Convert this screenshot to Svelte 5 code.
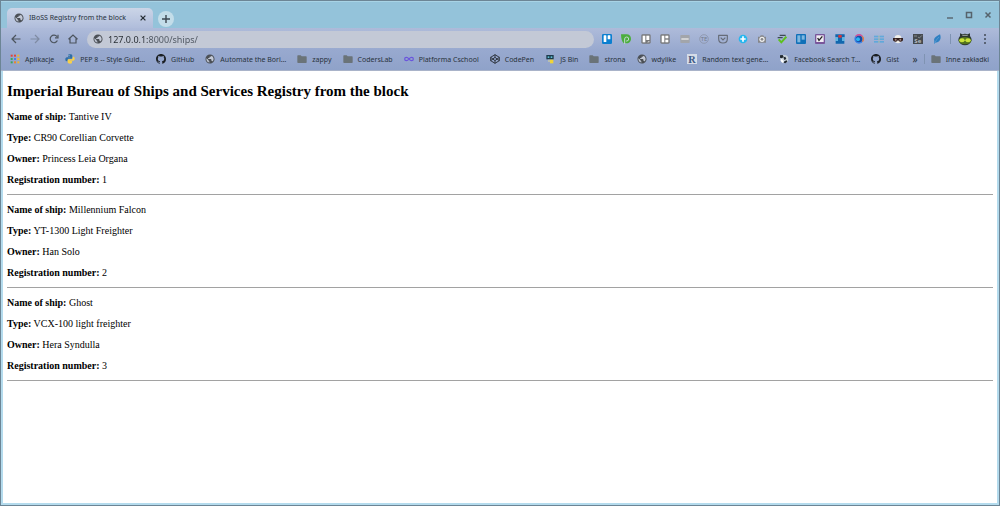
<script lang="ts">
	type Bookmark = { icon: string; label: string };

	const bookmarks: Bookmark[] = [
		{ icon: 'apps', label: 'Aplikacje' },
		{ icon: 'python', label: 'PEP 8 -- Style Guid…' },
		{ icon: 'github', label: 'GitHub' },
		{ icon: 'globe', label: 'Automate the Bori…' },
		{ icon: 'folder', label: 'zappy' },
		{ icon: 'folder', label: 'CodersLab' },
		{ icon: 'infinity', label: 'Platforma Cschool' },
		{ icon: 'codepen', label: 'CodePen' },
		{ icon: 'jsbin', label: 'JS Bin' },
		{ icon: 'folder', label: 'strona' },
		{ icon: 'globe', label: 'wdylike' },
		{ icon: 'random', label: 'Random text gene…' },
		{ icon: 'search', label: 'Facebook Search T…' },
		{ icon: 'github', label: 'Gist' }
	];

	const extensions = [
		'trello', 'pushed', 'board', 'boardAlt', 'strip', 'te', 'pocket', 'plus', 'camera',
		'check', 'trelloFlat', 'purple', 'flag', 'swirl', 'dots', 'incognito', 'selenium', 'feather'
	];

	const ships = [
		{ name: 'Tantive IV', type: 'CR90 Corellian Corvette', owner: 'Princess Leia Organa', number: 1 },
		{ name: 'Millennium Falcon', type: 'YT-1300 Light Freighter', owner: 'Han Solo', number: 2 },
		{ name: 'Ghost', type: 'VCX-100 light freighter', owner: 'Hera Syndulla', number: 3 }
	];

	const appColors = ['#e0453a', '#e0453a', '#f0b52a', '#3aa757', '#4a7fe0', '#f0b52a', '#3aa757', '#e8862e', '#f0b52a'];

	let address = $state('127.0.0.1:8000/ships/');
</script>

{#snippet globe()}
	<svg viewBox="1 1 22 22" fill="#4b5056">
		<circle cx="12" cy="12" r="8.5" fill="#c3c9d6" />
		<path d="M12 2C6.48 2 2 6.48 2 12s4.48 10 10 10 10-4.48 10-10S17.52 2 12 2zm-1 17.93c-3.95-.49-7-3.85-7-7.93 0-.62.08-1.21.21-1.79L9 15v1c0 1.1.9 2 2 2v1.93zm6.9-2.54c-.26-.81-1-1.39-1.9-1.39h-1v-3c0-.55-.45-1-1-1H8v-2h2c.55 0 1-.45 1-1V7h2c1.1 0 2-.9 2-2v-.41c2.93 1.19 5 4.06 5 7.41 0 2.08-.8 3.97-2.1 5.39z" />
	</svg>
{/snippet}

{#snippet folder()}
	<svg viewBox="0 0 30 30" fill="#6a7378">
		<path d="M1 6q0-2 2-2h8l3 3h13q2 0 2 2v16q0 2-2 2H3q-2 0-2-2z" />
	</svg>
{/snippet}

{#snippet bookmarkIcon(name: string)}
	{#if name === 'globe'}
		{@render globe()}
	{:else if name === 'folder'}
		{@render folder()}
	{:else if name === 'apps'}
		<svg viewBox="0 0 30 30">
			{#each appColors as color, i}
				<rect x={2 + (i % 3) * 10} y={2 + Math.floor(i / 3) * 10} width="6" height="6" fill={color} />
			{/each}
		</svg>
	{:else if name === 'python'}
		<svg viewBox="0 0 30 30">
			<path fill="#2f6ea5" d="M15 1c-6 0-6 2-6 5v3h7v1H6c-4 0-5 3-5 6s1 6 4 6h3v-4c0-3 2-4 4-4h7c2 0 3-1 3-3V6c0-4-3-5-7-5z" />
			<path fill="#f7d04a" d="M15 29c6 0 6-2 6-5v-3h-7v-1h10c4 0 5-3 5-6s-1-6-4-6h-2v4c0 3-2 4-4 4h-7c-2 0-4 1-4 3v5c0 4 4 5 7 5z" />
			<circle cx="12" cy="5" r="1.5" fill="#fff" />
		</svg>
	{:else if name === 'github'}
		<svg viewBox="0 0 16 16" fill="#1b1f23">
			<path d="M8 0C3.58 0 0 3.58 0 8c0 3.54 2.29 6.53 5.47 7.59.4.07.55-.17.55-.38 0-.19-.01-.82-.01-1.49-2.01.37-2.53-.49-2.69-.94-.09-.23-.48-.94-.82-1.13-.28-.15-.68-.52-.01-.53.63-.01 1.08.58 1.23.82.72 1.21 1.87.87 2.33.66.07-.52.28-.87.51-1.07-1.78-.2-3.64-.89-3.64-3.95 0-.87.31-1.59.82-2.15-.08-.2-.36-1.02.08-2.12 0 0 .67-.21 2.2.82.64-.18 1.32-.27 2-.27.68 0 1.36.09 2 .27 1.53-1.04 2.2-.82 2.2-.82.44 1.1.16 1.92.08 2.12.51.56.82 1.27.82 2.15 0 3.07-1.87 3.75-3.65 3.95.29.25.54.73.54 1.48 0 1.07-.01 1.93-.01 2.2 0 .21.15.46.55.38A8.013 8.013 0 0016 8c0-4.42-3.58-8-8-8z" />
		</svg>
	{:else if name === 'infinity'}
		<svg viewBox="0 0 30 30" fill="none" stroke="#6a55dc" stroke-width="3.5">
			<path d="M15 15c-3-4-5-5-8-5s-5 2-5 5 2 5 5 5 5-1 8-5 5-5 8-5 5 2 5 5-2 5-5 5-5-1-8-5z" />
		</svg>
	{:else if name === 'codepen'}
		<svg viewBox="0 0 30 30" fill="none" stroke="#23282e" stroke-width="2.6" stroke-linejoin="round">
			<path d="M15 2L28 10v10L15 28 2 20V10zM15 2v8M15 20v8M2 10l13 10 13-10M2 20l13-10 13 10" />
		</svg>
	{:else if name === 'jsbin'}
		<svg viewBox="0 0 30 30">
			<rect x="4" y="3" width="22" height="13" fill="#1d3a4a" />
			<rect x="8" y="7" width="5" height="5" fill="#5ec1d8" />
			<rect x="17" y="7" width="5" height="5" fill="#5ec1d8" />
			<rect x="9" y="17" width="6" height="7" fill="#b9bfae" />
			<rect x="15" y="17" width="10" height="11" fill="#f0d437" />
		</svg>
	{:else if name === 'random'}
		<svg viewBox="0 0 30 30">
			<rect width="30" height="30" fill="#d5dce8" />
			<text x="4" y="26" font-family="Liberation Serif, serif" font-size="31" font-weight="bold" fill="#3d5a85">R</text>
		</svg>
	{:else if name === 'search'}
		<svg viewBox="0 0 30 30">
			<circle cx="16" cy="15" r="12" fill="#c9d3dc" />
			<path fill="#22292f" d="M3 4l8-1 3 5-5 5-6-2zM13 10l6-2 3 7-6 3zM16 22l7-3 2 4-6 5-5-2z" />
			<path fill="#fff" d="M6 15l5 2 3 7-4 2-5-6z" />
		</svg>
	{/if}
{/snippet}

{#snippet extensionIcon(name: string)}
	<svg viewBox="0 0 30 30">
		{#if name === 'trello'}
			<rect width="30" height="30" rx="4" fill="#0b7fd0" />
			<rect x="5" y="4" width="8" height="20" rx="1" fill="#fff" />
			<rect x="17" y="4" width="8" height="12" rx="1" fill="#fff" />
		{:else if name === 'pushed'}
			<path fill="#4bae3c" d="M0 1h17c8 0 13 6 13 13s-5 14-13 14H8C3 23 0 14 0 1z" />
			<path fill="none" stroke="#c3d9d0" stroke-width="3" d="M11 30V15q0-6 6-6t6 6-6 6h-2" />
		{:else if name === 'board' || name === 'boardAlt'}
			<rect x="1" y="1" width="28" height="28" rx="4" fill="#77787a" />
			<rect x="5" y="5" width="8" height="20" fill="#fff" />
			{#if name === 'board'}
				<rect x="16" y="5" width="9" height="13" fill="#fff" />
				<path d="M18 25l7-4v4z" fill="#fff" />
			{:else}
				<rect x="16" y="5" width="9" height="8" fill="#fff" />
				<rect x="16" y="17" width="9" height="8" fill="#fff" />
			{/if}
		{:else if name === 'strip'}
			<rect x="1" y="3" width="28" height="24" rx="2" fill="#a2a5aa" />
			<path stroke="#e9e9e9" stroke-width="4" d="M4 15h22" />
		{:else if name === 'te'}
			<circle cx="15" cy="15" r="13" fill="none" stroke="#8890a2" stroke-width="2" />
			<text x="15" y="22" text-anchor="middle" font-family="Noto Sans, sans-serif" font-size="18" fill="#737b8c">TE</text>
		{:else if name === 'pocket'}
			<path fill="none" stroke="#666c78" stroke-width="3.5" stroke-linejoin="round" d="M2 4h26v10c0 8-6 13-13 13S2 22 2 14z" />
			<path fill="none" stroke="#666c78" stroke-width="3.5" d="M8 11l7 7 7-7" />
		{:else if name === 'plus'}
			<circle cx="15" cy="15" r="13" fill="#28b7ef" />
			<path stroke="#fff" stroke-width="5" d="M15 7v16M7 15h16" />
		{:else if name === 'camera'}
			<path fill="#85868a" d="M3 8h6l2-4h8l2 4h6v18H3z" />
			<circle cx="15" cy="16" r="8" fill="#eee" />
			<circle cx="15" cy="16" r="4" fill="#85868a" />
		{:else if name === 'check'}
			<path fill="#3e4a53" d="M8 2h18v4H8zM2 9h15v4H2z" />
			<path fill="none" stroke="#5cc11e" stroke-width="6" d="M5 16l8 9L28 8" />
		{:else if name === 'trelloFlat'}
			<rect width="30" height="30" rx="3" fill="#1070b8" />
			<rect x="4" y="4" width="9" height="21" fill="#7fb7df" />
			<rect x="17" y="4" width="9" height="13" fill="#7fb7df" />
		{:else if name === 'purple'}
			<rect width="30" height="30" rx="3" fill="#79569b" />
			<rect x="4" y="4" width="22" height="20" fill="#f0edf4" />
			<path fill="none" stroke="#222" stroke-width="4" d="M8 12l4 7L22 7" />
		{:else if name === 'flag'}
			<path fill="#1167ae" d="M1 1h28v9h-7v11h6v8H2v-8h6V10H1z" />
			<path fill="#61b5e2" d="M1 10h8v11H1zM21 10h8v11h-8z" />
			<rect x="10" y="3" width="10" height="8" fill="#db3437" />
		{:else if name === 'swirl'}
			<circle cx="15" cy="15" r="12" fill="#174ea3" stroke="#3e85ea" stroke-width="4" />
			<path fill="none" stroke="#e54c8a" stroke-width="4" d="M5 7A13 13 0 0 1 25 7" />
			<path fill="none" stroke="#f07a3d" stroke-width="4" d="M25 7A13 13 0 0 1 25 23" />
			<circle cx="12" cy="16" r="6" fill="#28b5f4" />
		{:else if name === 'dots'}
			{#each [0, 1, 2, 3, 4] as col}
				{#each [0, 1, 2] as row}
					<rect x={col * 6 + 1} y={row * 8 + 5} width="4" height="5" fill={col === 2 ? '#8bb6a8' : '#42a5dd'} />
				{/each}
			{/each}
		{:else if name === 'incognito'}
			<path fill="#f0eee9" d="M5 11q0-8 10-8t10 8v11q-2 6-10 6t-10-6z" />
			<path fill="#32201f" d="M0 12h30v7q-3 5-8 4-5 0-7-5-2 5-7 5-5 1-8-4z" />
			<circle cx="8" cy="17" r="3" fill="#a48683" />
			<circle cx="22" cy="17" r="3" fill="#a48683" />
		{:else if name === 'selenium'}
			<rect width="30" height="30" fill="#454a4f" />
			<path stroke="#a4aaae" stroke-width="2" d="M3 6h9M15 9l4 3 8-8" fill="none" />
			<text x="4" y="27" font-family="Noto Sans, sans-serif" font-size="18" font-weight="bold" fill="#b7bdc0">Se</text>
		{:else if name === 'feather'}
			<path fill="#2f80c2" d="M24 1c4 10 2 20-8 24l-6 1-4 4 1-9C4 12 13 8 24 1z" />
			<path fill="none" stroke="#76aedb" stroke-width="1.5" d="M8 27q7-13 13-18" />
		{/if}
	</svg>
{/snippet}

<div class="window">
	<header>
		<div class="tabs">
			<div class="tab">
				<span class="icon">{@render globe()}</span>
				<span class="tab-title">IBoSS Registry from the block</span>
				<button class="tab-close" aria-label="Close tab">
					<svg viewBox="0 0 10 10" stroke="#262d34" stroke-width="1.6"><path d="M2 2l6 6M8 2L2 8" /></svg>
				</button>
			</div>
			<button class="new-tab" aria-label="New tab">
				<svg viewBox="0 0 10 10" stroke="#3c4750" stroke-width="1.4"><path d="M5 1v8M1 5h8" /></svg>
			</button>
			<div class="controls">
				<button aria-label="Minimize">
					<svg viewBox="0 0 8 8" stroke="#56636c" stroke-width="1.4"><path d="M1 7h6" /></svg>
				</button>
				<button aria-label="Maximize">
					<svg viewBox="0 0 8 8" stroke="#56636c" stroke-width="1.5" fill="none"><path d="M1.500 1.500h5v5h-5z" /></svg>
				</button>
				<button aria-label="Close">
					<svg viewBox="0 0 8 8" stroke="#56636c" stroke-width="1.5"><path d="M1.500 1.500l5 5M6.500 1.500l-5 5" /></svg>
				</button>
			</div>
		</div>

		<div class="toolbar">
			<nav class="history" aria-label="History">
				<button aria-label="Back">
					<svg viewBox="0 0 10 10"><path d="M9.500 5H1.500M5 1L1 5l4 4" /></svg>
				</button>
				<button aria-label="Forward" disabled>
					<svg viewBox="0 0 10 10"><path d="M.5 5h8M5 1l4 4-4 4" /></svg>
				</button>
				<button aria-label="Reload">
					<svg viewBox="0 0 10 10"><path d="M8.400 6.600A3.800 3.800 0 1 1 8 2.600M9 .8v3H6" /></svg>
				</button>
				<button aria-label="Home">
					<svg viewBox="0 0 10 10"><path d="M.5 5.300L5 1l4.500 4.300M2 4.500V9h6V4.500" /></svg>
				</button>
			</nav>
			<div class="address">
				<span class="icon">{@render globe()}</span>
				<input type="text" aria-label="Address" bind:value={address} />
			</div>
			<div class="extensions">
				{#each extensions as name}
					<button aria-label={name}>{@render extensionIcon(name)}</button>
				{/each}
			</div>
			<span class="divider"></span>
			<button class="avatar" aria-label="Profile">
				<svg viewBox="0 0 42 42">
					<path fill="#2d3832" d="M6 4l7 3q8-4 16 0l7-3v8q5 5 5 13-5 15-20 15T1 25q0-8 5-13z" />
					<ellipse cx="21" cy="26" rx="19" ry="11" fill="#55751d" />
					<ellipse cx="12" cy="25" rx="8" ry="6" fill="#c9e23c" />
					<ellipse cx="30" cy="25" rx="8" ry="6" fill="#c9e23c" />
					<path stroke="#a4aea6" stroke-width="3" d="M13 10h16" />
				</svg>
			</button>
			<button class="menu" aria-label="Menu">
				<svg viewBox="0 0 4 12" fill="#424a54">
					<circle cx="2" cy="2" r="1" /><circle cx="2" cy="6" r="1" /><circle cx="2" cy="10" r="1" />
				</svg>
			</button>
		</div>

		<nav class="bookmarks" aria-label="Bookmarks">
			{#each bookmarks as bookmark}
				<a href="#bookmark">
					<span class="icon">{@render bookmarkIcon(bookmark.icon)}</span>
					{bookmark.label}
				</a>
			{/each}
			<button class="more" aria-label="More bookmarks">»</button>
			<span class="divider"></span>
			<a href="#other">
				<span class="icon">{@render folder()}</span>
				Inne zakładki
			</a>
		</nav>
	</header>

	<main>
		<h1>Imperial Bureau of Ships and Services Registry from the block</h1>
		{#each ships as ship}
			<section>
				<p><b>Name of ship:</b> {ship.name}</p>
				<p><b>Type:</b> {ship.type}</p>
				<p><b>Owner:</b> {ship.owner}</p>
				<p><b>Registration number:</b> {ship.number}</p>
			</section>
			<hr />
		{/each}
	</main>
</div>

<style>
	:global(body) {
		margin: 0;
	}

	.window {
		box-sizing: border-box;
		min-height: 100vh;
		display: flex;
		flex-direction: column;
		border: 1px solid #6c8595;
		background: #94c3da;
		font-family: 'Noto Sans', sans-serif;
		font-size: 7px;
		color: #28323b;
	}

	button {
		display: flex;
		align-items: center;
		justify-content: center;
		padding: 0;
		border: none;
		background: none;
		color: inherit;
		font: inherit;
		cursor: pointer;
	}

	svg {
		display: block;
		width: 100%;
		height: 100%;
	}

	.icon {
		flex: none;
		width: 10px;
		height: 10px;
	}

	.tabs {
		display: flex;
		align-items: center;
		height: 27px;
		padding: 0 7px 0 6px;
		border-top: 1px solid #a8d3e5;
		box-sizing: border-box;
	}

	.tab {
		box-sizing: border-box;
		align-self: flex-end;
		display: flex;
		align-items: center;
		width: 146px;
		height: 20px;
		padding: 0 6px 1px 7px;
		border-radius: 5px 5px 0 0;
		background: linear-gradient(#cbd5e7, #b0bddb);
	}

	.tab-title {
		flex: 1;
		margin-left: 5px;
		white-space: nowrap;
	}

	.tab-close {
		width: 8px;
		height: 8px;
	}

	.new-tab {
		box-sizing: border-box;
		width: 16px;
		height: 16px;
		margin: 8px 0 0 5px;
		padding: 3px;
		border-radius: 50%;
		background: #c3dde9;
	}

	.controls {
		display: flex;
		gap: 11px;
		margin-left: auto;
	}

	.controls button {
		width: 8px;
		height: 8px;
	}

	.toolbar {
		display: flex;
		align-items: center;
		height: 22px;
		padding: 0 12px 0 10px;
		background: linear-gradient(#aebbda, #98a9cf);
	}

	.history {
		display: flex;
		gap: 9px;
	}

	.history button {
		width: 10px;
		height: 10px;
	}

	.history svg {
		fill: none;
		stroke: #4c545e;
		stroke-width: 1.2;
	}

	.history button:disabled svg {
		stroke: #7f8ba3;
	}

	.address {
		flex: 1;
		display: flex;
		align-items: center;
		gap: 5px;
		height: 17px;
		margin: 0 8px 0 9px;
		padding: 0 6px;
		border-radius: 9px;
		background: #c3c9d6;
	}

	/* Host part is darker than the port and path */
	.address input {
		flex: 1;
		min-width: 0;
		padding: 0;
		border: none;
		outline: none;
		background: linear-gradient(90deg, #252b31 40px, #4d555f 40px);
		background-clip: text;
		color: transparent;
		caret-color: #252b31;
		font: 9px 'Noto Sans', sans-serif;
	}

	.extensions {
		flex: 0 0 340px;
		display: flex;
		justify-content: space-between;
	}

	.extensions button {
		width: 10px;
		height: 10px;
	}

	.divider {
		width: 1px;
		height: 10px;
		background: #7f93b2;
	}

	.toolbar .divider {
		margin: 0 7px 0 8px;
	}

	.avatar {
		width: 14px;
		height: 14px;
	}

	.menu {
		width: 4px;
		height: 12px;
		margin-left: 11px;
	}

	.bookmarks {
		box-sizing: border-box;
		display: flex;
		align-items: center;
		gap: 11px;
		height: 21px;
		padding: 0 10px 2px 9px;
		border-bottom: 1px solid #a9b3c9;
		background: linear-gradient(#98a9cf, #8fa2c9);
	}

	.bookmarks a {
		display: flex;
		align-items: center;
		gap: 5px;
		color: inherit;
		text-decoration: none;
		white-space: nowrap;
	}

	.more {
		margin-left: auto;
		font-size: 10px;
	}

	.bookmarks .divider {
		margin: 0 -5px;
	}

	main {
		flex: 1;
		padding: 12px 4px 0;
		border: 2px solid #b4dbed;
		border-top: none;
		background: #fff;
		color: #000;
		font: 10px/11px 'Liberation Serif', serif;
	}

	h1 {
		margin: 0 0 12px;
		font-size: 15px;
		line-height: 16px;
	}

	section {
		display: flex;
		flex-direction: column;
		gap: 10px;
	}

	p {
		margin: 0;
	}

	hr {
		height: 1px;
		margin: 9px 0;
		border: none;
		background: #a2a2a2;
	}
</style>
